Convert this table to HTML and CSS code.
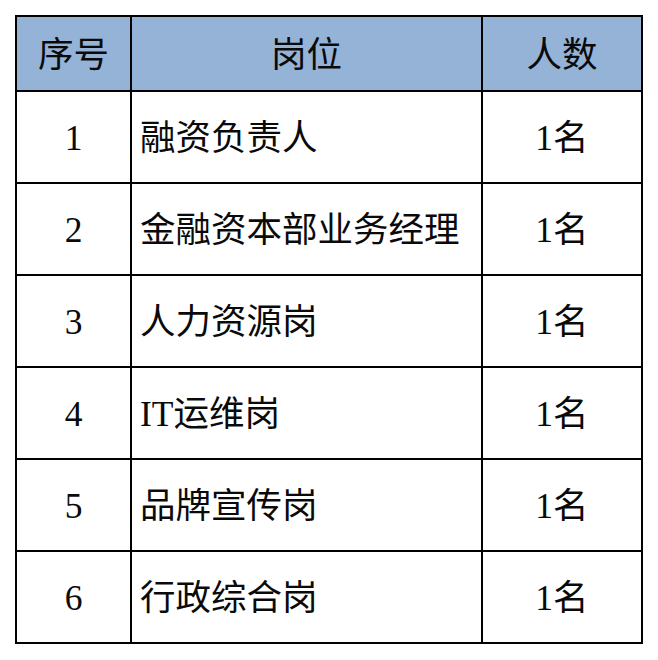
FILE: index.html
```html
<!DOCTYPE html>
<html lang="zh-CN">
<head>
<meta charset="utf-8">
<title>岗位表</title>
<link rel="stylesheet" href="styles.css">
</head>
<body>
<div class="table">
  <div class="cell head center">序号</div>
  <div class="cell head center">岗位</div>
  <div class="cell head center">人数</div>

  <div class="cell center">1</div>
  <div class="cell left">融资负责人</div>
  <div class="cell center">1名</div>

  <div class="cell center">2</div>
  <div class="cell left">金融资本部业务经理</div>
  <div class="cell center">1名</div>

  <div class="cell center">3</div>
  <div class="cell left">人力资源岗</div>
  <div class="cell center">1名</div>

  <div class="cell center">4</div>
  <div class="cell left">IT运维岗</div>
  <div class="cell center">1名</div>

  <div class="cell center">5</div>
  <div class="cell left">品牌宣传岗</div>
  <div class="cell center">1名</div>

  <div class="cell center">6</div>
  <div class="cell left">行政综合岗</div>
  <div class="cell center">1名</div>
</div>
</body>
</html>
```
FILE: styles.css
```css
html, body {
  margin: 0;
  padding: 0;
  background: #ffffff;
}

body {
  padding: 15px;
  font-family: "Liberation Serif", "Noto Sans CJK SC", serif;
  font-size: 35.5px;
  color: #0a0a0a;
}

.table {
  display: grid;
  grid-template-columns: 113px 349px 158px;
  grid-template-rows: 73px repeat(6, 90px);
  gap: 2px;
  padding: 2px;
  background: #000000;
  width: max-content;
}

.cell {
  background: #ffffff;
  display: flex;
  align-items: center;
  padding-top: 4px;
  box-sizing: border-box;
  line-height: 1;
  white-space: nowrap;
}

.head {
  background: #95b3d7;
}

.center {
  justify-content: center;
}

.left {
  justify-content: flex-start;
  padding-left: 8px;
}
```
